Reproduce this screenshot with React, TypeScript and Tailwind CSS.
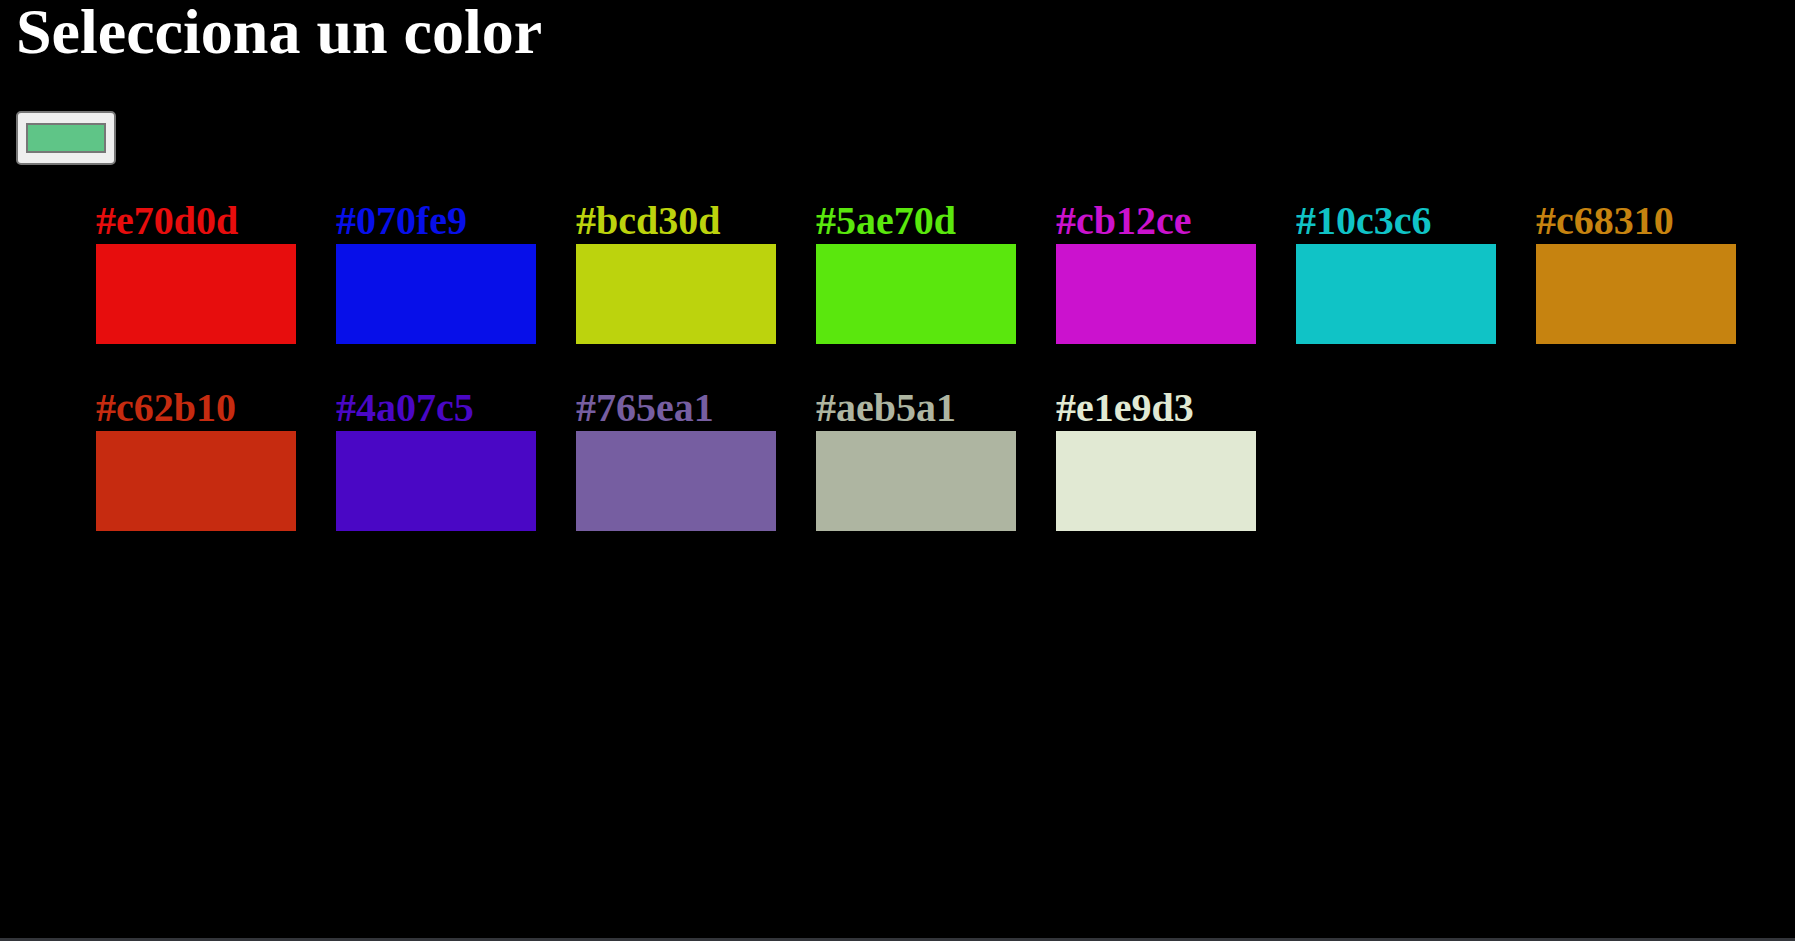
const colors = [
  "#e70d0d",
  "#070fe9",
  "#bcd30d",
  "#5ae70d",
  "#cb12ce",
  "#10c3c6",
  "#c68310",
  "#c62b10",
  "#4a07c5",
  "#765ea1",
  "#aeb5a1",
  "#e1e9d3",
];

const App = () => {
  return (
    <div className="min-h-screen bg-black flex flex-col font-['Liberation_Serif',serif]">
      <div className="px-4">
        <h1 className="text-white text-[64px] leading-[64px] font-bold">
          Selecciona un color
        </h1>

        {/* color picker */}
        <div className="mt-[47px] w-[100px] h-[54px] bg-[#efefef] border-2 border-[#767676] rounded-[5px] flex items-center justify-center">
          <div className="w-[80px] h-[30px] bg-[#5fc587] border-2 border-[#777777]" />
        </div>

        {/* swatches */}
        <div className="mt-[33px] ml-20 grid grid-cols-[repeat(7,200px)] gap-x-10 gap-y-[41px]">
          {colors.map((c) => (
            <div key={c} className="flex flex-col">
              <span
                style={{ color: c }}
                className="text-[40px] leading-[46px] font-bold"
              >
                {c}
              </span>
              <div style={{ backgroundColor: c }} className="w-[200px] h-[100px]" />
            </div>
          ))}
        </div>
      </div>

      <div className="mt-auto h-[3px] bg-[#33353a]" />
    </div>
  );
};

export default App;
